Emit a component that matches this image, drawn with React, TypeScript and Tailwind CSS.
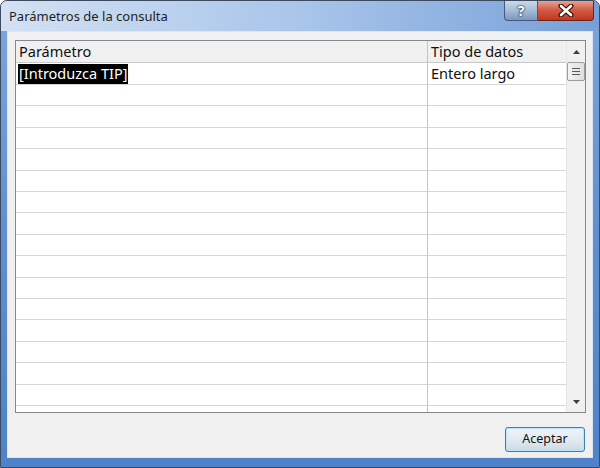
import React from "react";

const rowHeights = [
  "h-[22px]", "h-[21px]", "h-[22px]", "h-[21px]", "h-[22px]", "h-[21px]",
  "h-[21px]", "h-[22px]", "h-[21px]", "h-[22px]", "h-[21px]", "h-[21px]",
  "h-[22px]", "h-[21px]", "h-[22px]", "h-[21px]",
];

export default function App() {
  return (
    <div
      className="w-[600px] h-[468px] flex flex-col overflow-hidden rounded-t-[7px] border border-[#3b4a5e] bg-gradient-to-b from-[#7da6dc] via-[#5f8fd2] to-[#4f82c9]"
      style={{ fontFamily: '"Noto Sans", "Open Sans", Arial, sans-serif' }}
    >
      {/* Title bar */}
      <div className="h-[30px] shrink-0 flex items-start justify-between bg-gradient-to-r from-[#d3e1f3] via-[#a9c5ea] to-[#77a0d8]">
        <div className="pl-[8px] pt-[7px] text-[13px] leading-[16px] text-[#1e1e1e]">
          Parámetros de la consulta
        </div>
        <div className="flex mr-[5px] -mt-px">
          <div className="w-[34px] h-[21px] flex items-center justify-center rounded-bl-[4px] border border-[#46597a] border-t-0 bg-gradient-to-b from-[#cfdcec] via-[#a8bdd8] to-[#7a98c0]">
            <span className="text-white text-[15px] font-bold leading-none [text-shadow:0_0_2px_#1b2b45,0_0_1px_#1b2b45,0_0_1px_#1b2b45]">
              ?
            </span>
          </div>
          <div className="w-[56px] h-[21px] flex items-center justify-center rounded-br-[4px] border border-[#6b2418] border-t-0 border-l-0 bg-gradient-to-b from-[#e9a898] via-[#d25b44] to-[#c1361c]">
            <svg width="16" height="13" viewBox="0 0 16 13">
              <path d="M3 2 L13 11 M13 2 L3 11" stroke="#3a1008" strokeWidth="5" strokeLinecap="round" />
              <path d="M3 2 L13 11 M13 2 L3 11" stroke="#ffffff" strokeWidth="2.6" strokeLinecap="round" />
            </svg>
          </div>
        </div>
      </div>

      {/* Body frame */}
      <div className="flex-1 flex flex-col px-[6px] pb-[9px]">
        <div className="flex-1 flex flex-col border border-[#dde6f1] bg-[#f0f0f0] pt-[8px] pl-[7px] pr-[6px]">
          {/* Grid */}
          <div className="h-[373px] flex border border-[#828790] bg-white overflow-hidden">
            <div className="w-[550px] flex flex-col">
              {/* header */}
              <div className="h-[22px] shrink-0 flex bg-[#f0f0f0] border-b border-[#c9c9c9] text-[14.5px] leading-[20px] text-[#111]">
                <div className="w-[412px] border-r border-[#c4c4c4] pl-[3px]">Parámetro</div>
                <div className="w-[138px] pl-[3px]">Tipo de datos</div>
              </div>
              {rowHeights.map((h, i) => (
                <div key={i} className={`${h} shrink-0 flex border-b border-[#d5d5d5] text-[14.5px] text-[#111]`}>
                  <div className="w-[412px] border-r border-[#c4c4c4] pl-[2px] flex items-start">
                    {i === 0 ? (
                      <span className="mt-[1px] bg-black text-white px-[1px] h-[20px] leading-[19px]">
                        [Introduzca TIP]
                      </span>
                    ) : null}
                  </div>
                  <div className="w-[138px] pl-[3px] leading-[20px]">
                    {i === 0 ? "Entero largo" : ""}
                  </div>
                </div>
              ))}
              <div className="flex-1 flex">
                <div className="w-[412px] border-r border-[#c4c4c4]" />
              </div>
            </div>
            {/* Scrollbar */}
            <div className="w-[19px] flex flex-col bg-[#f0f0f0] border-l border-[#e6e6e6]">
              <div className="h-[21px] flex items-center justify-center">
                <svg width="7" height="4" viewBox="0 0 7 4">
                  <path d="M0 4 L3.5 0 L7 4 Z" fill="#3c3c3c" />
                </svg>
              </div>
              <div className="h-[19px] rounded-[2px] border border-[#9c9c9c] bg-gradient-to-r from-[#f4f4f4] to-[#dedede] flex flex-col items-center justify-center gap-[2px]">
                <div className="w-[8px] h-px bg-[#5a5a5a]" />
                <div className="w-[8px] h-px bg-[#5a5a5a]" />
                <div className="w-[8px] h-px bg-[#5a5a5a]" />
              </div>
              <div className="flex-1" />
              <div className="h-[21px] flex items-center justify-center">
                <svg width="7" height="4" viewBox="0 0 7 4">
                  <path d="M0 0 L7 0 L3.5 4 Z" fill="#3c3c3c" />
                </svg>
              </div>
            </div>
          </div>
          {/* Footer */}
          <div className="flex justify-end pt-[14px] pr-[1px]">
            <div className="w-[80px] h-[25px] rounded-[3px] border border-[#3c7fb1] bg-gradient-to-b from-[#eef4f9] via-[#e2ebf2] to-[#cbd9e5] shadow-[inset_0_0_0_1px_#bfe3fb] flex items-center justify-center text-[12.5px] text-[#111]">
              Aceptar
            </div>
          </div>
        </div>
      </div>
    </div>
  );
}
